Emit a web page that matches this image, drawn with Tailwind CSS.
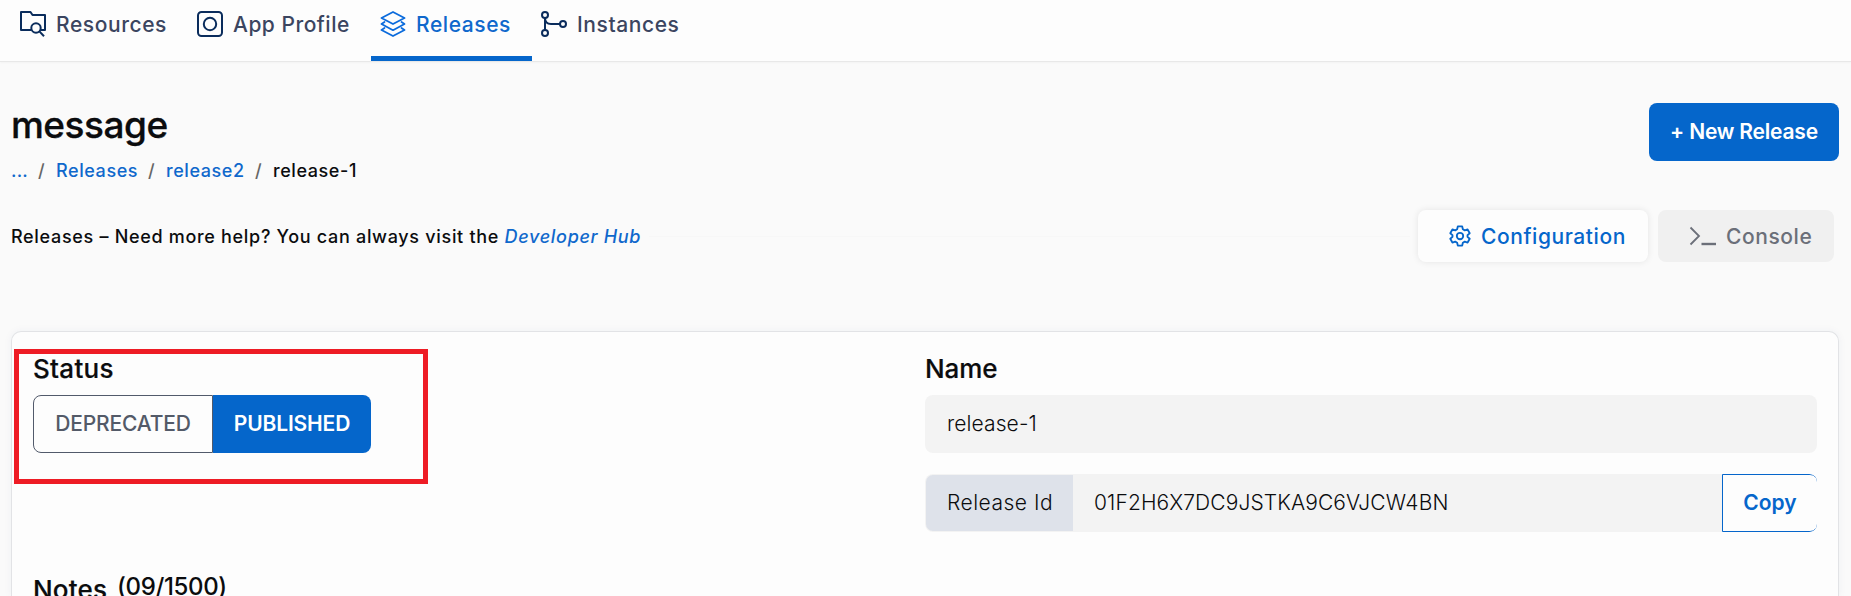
<!DOCTYPE html>
<html lang="en">
<head>
<meta charset="utf-8">
<title>message - Releases</title>
<script src="https://cdn.jsdelivr.net/npm/@tailwindcss/browser@4"></script>
</head>
<body class="h-[596px] overflow-hidden bg-[#fafafa] font-[Inter,sans-serif] text-[#0b0c0e]">
<nav class="flex h-[62px] border-b border-[#e8e8e8] bg-[#fdfdfd] pl-[11px] text-[21px] font-medium tracking-[0.580px] text-[#3b4560] shadow-[0_1px_2px_rgba(0,0,0,0.03)]">
  <a class="flex h-[61px] w-[177px] items-start pt-[11px] pl-[9px] leading-[28px] whitespace-nowrap">
    <svg class="mr-[10px] h-[26px] w-[26px] shrink-0" viewBox="0 0 26 26" fill="none" stroke="#0a2c5c" stroke-width="2" stroke-linejoin="round"><path d="M11.500 19H1V1H10.500L12.500 4H25V19H20.500"/><circle cx="16" cy="17" r="4.700"/><path d="M19.400 20.400L24 25.200"/></svg>
    <span>Resources</span>
  </a>
  <a class="flex h-[61px] w-[183px] items-start pt-[11px] pl-[9px] leading-[28px] tracking-[0.5px] whitespace-nowrap">
    <svg class="mr-[10px] h-[26px] w-[26px] shrink-0" viewBox="0 0 26 26" fill="none" stroke="#0a2c5c" stroke-width="2"><rect x="1" y="1" width="24" height="24" rx="3.5"/><circle cx="13" cy="13" r="6.2"/></svg>
    <span>App Profile</span>
  </a>
  <a class="flex h-[61px] w-[161px] items-start border-b-[5px] border-[#0566cb] pt-[11px] pl-[9px] leading-[28px] whitespace-nowrap text-[#0f68cc]">
    <svg class="mr-[10px] h-[26px] w-[26px] shrink-0" viewBox="0 0 26 26" fill="none" stroke="#0b6bdc" stroke-width="1.800" stroke-linejoin="round" stroke-linecap="round"><path d="M13 1L24.500 7L13 13L1.500 7Z"/><path d="M4.500 11L1.500 13L13 19.200L24.500 13L21.500 11"/><path d="M4.500 17L1.500 19L13 25L24.500 19L21.500 17"/></svg>
    <span>Releases</span>
  </a>
  <a class="flex h-[61px] items-start pt-[11px] pl-[9px] leading-[28px] whitespace-nowrap">
    <svg class="mr-[10px] h-[26px] w-[26px] shrink-0" viewBox="0 0 26 26" fill="none" stroke="#0a2c5c" stroke-width="2"><circle cx="4" cy="4" r="3"/><circle cx="4" cy="22" r="3"/><circle cx="22" cy="13" r="3"/><path d="M4 7V19M4 7C4 11 6 13 10 13H19"/></svg>
    <span>Instances</span>
  </a>
</nav>
<main class="pr-[12px] pl-[11px]">
  <header class="flex h-[148px] justify-between pt-[41px]">
    <div>
      <h1 class="-mt-px h-[46px] text-[37px] leading-[46px] font-medium tracking-[-0.500px] [-webkit-text-stroke:0.300px_#0b0c0e]">message</h1>
      <div class="mt-[11px] flex text-[18px] leading-[24px] font-medium tracking-[0.580px] whitespace-nowrap">
        <span class="w-[27px] tracking-[0.2px] text-[#0f68cc]">...</span><span class="w-[18px] text-[#666]">/</span>
        <span class="w-[92px] text-[#0f68cc]">Releases</span><span class="w-[18px] text-[#666]">/</span>
        <span class="w-[89px] text-[#0f68cc]">release2</span><span class="w-[18px] text-[#666]">/</span>
        <span>release-1</span>
      </div>
    </div>
    <button class="h-[58px] w-[190px] rounded-[8px] bg-[#0566cb] text-[21px] font-semibold tracking-[-0.200px] whitespace-nowrap text-white">+ New Release</button>
  </header>
  <div class="flex h-[52px] items-center pr-[5px]">
    <p class="mt-[2px] text-[18px] leading-[24px] font-medium tracking-[0.690px] whitespace-nowrap">Releases – Need more help? You can always visit the <a class="text-[#0f68cc] italic">Developer Hub</a></p>
    <div class="mx-[8px] h-px flex-1 bg-[#f7f7f7]"></div>
    <button class="flex h-[52px] w-[230px] items-center rounded-[8px] bg-[#fdfdfd] pl-[31px] text-[21px] font-medium tracking-[0.580px] text-[#0566cb] shadow-[0_0_7px_rgba(0,0,0,0.09)]">
      <svg class="mr-[10px] h-[22px] w-[22px] shrink-0" viewBox="0 0 24 24" fill="none" stroke="#0566cb" stroke-width="2" stroke-linejoin="round"><circle cx="12" cy="12" r="3.5"/><path d="M9.600 1.500h4.800l.7 3.200 2.100 1.200 3.100-1 2.300 4.100-2.400 2.100v1.800l2.400 2.100-2.300 4.100-3.100-1-2.100 1.200-.7 3.200H9.600l-.7-3.200-2.100-1.200-3.100 1-2.300-4.100 2.400-2.100v-1.800L1.400 9l2.300-4.100 3.100 1 2.100-1.200z"/></svg>
      <span class="mt-[2px]">Configuration</span>
    </button>
    <button class="ml-[10px] flex h-[52px] w-[176px] items-center rounded-[8px] bg-[#f0f0f0] pl-[31px] text-[21px] font-medium tracking-[0.580px] text-[#6b6f79]">
      <svg class="mr-[9px] h-[20px] w-[28px] shrink-0" viewBox="0 0 28 20" fill="none" stroke="#6b6f79"><path d="M1.500 1.500L10 10L1.500 18.500" stroke-width="1.800"/><path d="M12.500 18H27" stroke-width="2.400"/></svg>
      <span class="mt-[2px]">Console</span>
    </button>
  </div>
  <section class="relative mt-[69px] flex h-[265px] overflow-hidden rounded-t-[10px] border border-b-0 border-[#e2e3e6] bg-[#fdfdfd] px-[21px] pt-[20px] shadow-[0_0_8px_rgba(40,60,120,0.05)]">
    <div class="w-[892px]">
      <h2 class="h-[34px] text-[26px] leading-[34px] font-medium tracking-[0.300px] [-webkit-text-stroke:0.200px_#0b0c0e]">Status</h2>
      <div class="mt-[9px] flex h-[58px] w-[338px] text-[21px] font-medium">
        <button class="w-[180px] rounded-l-[8px] border border-[#525a6b] tracking-[-0.150px] text-[#535a68]">DEPRECATED</button>
        <button class="w-[158px] rounded-r-[8px] bg-[#0566cb] font-semibold tracking-[-0.150px] text-white">PUBLISHED</button>
      </div>
      <div class="mt-[117px] flex whitespace-nowrap">
        <h2 class="mt-[3px] w-[84px] text-[26px] leading-[34px] font-medium tracking-[0.200px] [-webkit-text-stroke:0.200px_#0b0c0e]">Notes</h2>
        <span class="text-[24px] leading-[34px] font-medium tracking-[-0.350px]">(09/1500)</span>
      </div>
    </div>
    <div class="w-[892px]">
      <h2 class="h-[34px] text-[26px] leading-[34px] font-medium tracking-[-0.100px] [-webkit-text-stroke:0.200px_#0b0c0e]">Name</h2>
      <div class="mt-[9px] flex h-[58px] items-center rounded-[8px] bg-[#f3f3f3] pl-[22px] text-[21px] font-light tracking-[0.100px]">release-1</div>
      <div class="mt-[21px] flex h-[58px] overflow-hidden rounded-[8px] bg-[#f3f3f3] text-[21px]">
        <div class="my-px ml-px flex w-[147px] items-center rounded-l-[7px] bg-[#dee2ea] pl-[21px] font-light tracking-[0.5px] whitespace-nowrap">Release Id</div>
        <div class="flex flex-1 items-center pl-[21px] font-light tracking-[0.100px] whitespace-nowrap">01F2H6X7DC9JSTKA9C6VJCW4BN</div>
        <button class="-mr-px w-[96px] rounded-r-[8px] border border-[#0566cb] bg-[#fdfdfd] font-semibold text-[#0566cb]">Copy</button>
      </div>
    </div>
    <div class="absolute top-[17px] left-[2px] h-[135px] w-[414px] border-[5px] border-[#ee1c25]"></div>
  </section>
</main>
</body>
</html>
